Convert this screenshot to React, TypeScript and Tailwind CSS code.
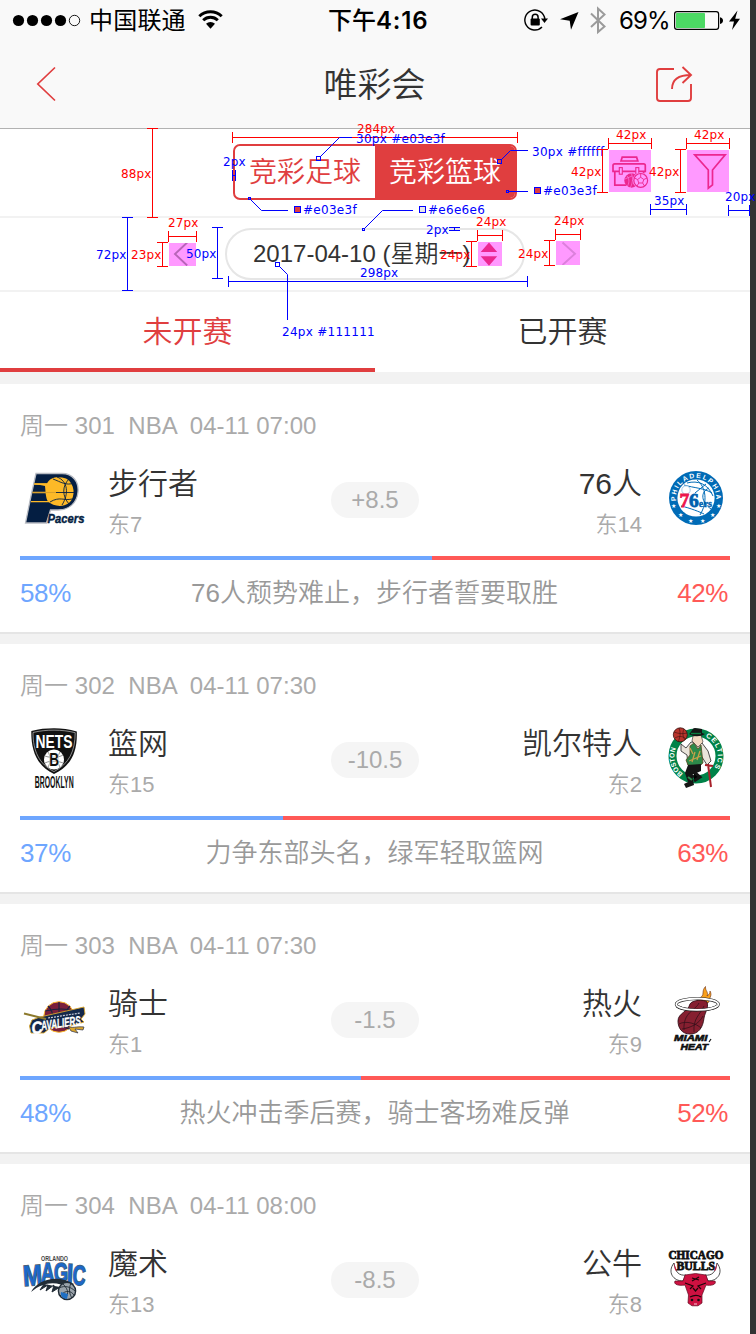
import React from "react";

type Match = {
  no: string;
  time: string;
  home: string;
  homeRank: string;
  away: string;
  awayRank: string;
  spread: string;
  homePct?: number;
  note?: string;
  homeLogo: React.ReactNode;
  awayLogo: React.ReactNode;
};

const LATIN = "Liberation Sans, Arial, sans-serif";
const BOLD = { fontFamily: LATIN, fontWeight: 700 };

/* ---------- team logos ---------- */

function LeftLogo({ children }: { children: React.ReactNode }) {
  return (
    <svg className="h-[72px] w-[72px] shrink-0 overflow-visible" viewBox="18 80 72 72">
      {children}
    </svg>
  );
}

function RightLogo({ children }: { children: React.ReactNode }) {
  return (
    <svg className="h-[72px] w-[72px] shrink-0 overflow-visible" viewBox="660 80 72 72">
      {children}
    </svg>
  );
}

const pacers = (
  <LeftLogo>
    <path d="M36 89.5H62C73 89.5 79 98 78 108C77 119 69 126 58 126H50.5L46.5 139H25.5L31 112Z" fill="#041e42" stroke="#b9bcc3" strokeWidth="1.3" />
    <path d="M34 100H48M32.5 108.5H46M31 117.7H50" stroke="#fdb927" strokeWidth="1.3" />
    <path d="M35 99.5H47C50 93 58 92 66 94.5C75 99 76 113 69 119C62 124 53 122 48 117.5C45.5 114 45.5 106 45 102C42 101 38 101 35 100.5Z" fill="#fdb927" />
    <path d="M36 108.5H74M53 95C61 98 66 102 74 99M50 118C60 112 64 117 72 115M69 95C62 102 62 112 69 120M57 93C68 97 69 110 62 121" fill="none" stroke="#041e42" strokeWidth="0.9" />
    <path d="M33 108.5H56" stroke="#d9a02a" strokeWidth="1" />
    <text x="47.5" y="139" fontSize="13.5" fontStyle="italic" {...BOLD} textLength="37" lengthAdjust="spacingAndGlyphs" fill="#041e42" stroke="#041e42" strokeWidth="0.4">Pacers</text>
  </LeftLogo>
);

const sixers = (
  <RightLogo>
    <circle cx="696" cy="114" r="27" fill="#006bb6" />
    <circle cx="696" cy="114" r="18.6" fill="#fff" />
    <path id="sixers-arc" d="M676 117A20.2 20.2 0 1 1 716 117" fill="none" />
    <text fontSize="6.8" {...BOLD} fill="#fff">
      <textPath href="#sixers-arc" textLength="67">PHILADELPHIA</textPath>
    </text>
    <path d="M684 101C694 104 704 104 712 109M697 96C706 103 708 118 700 131M687 99C698 96 708 100 713 112M706 100L695 109M681 122C690 124 700 128 704 130M709 104C700 108 701 118 711 125" fill="none" stroke="#006bb6" strokeWidth="1" />
    <circle cx="686" cy="106" r="4.2" fill="#fff" stroke="#8fbde0" strokeWidth="0.8" />
    <text x="679.5" y="123.3" fontSize="19.5" fontFamily="Liberation Serif, serif" fontWeight="700" fill="#ed174c" stroke="#ed174c" strokeWidth="0.8">7</text>
    <text x="689" y="123.3" fontSize="19.5" fontFamily="Liberation Serif, serif" fontWeight="700" fill="#0060ae" stroke="#0060ae" strokeWidth="0.8">6</text>
    <text x="698.8" y="122.8" fontSize="11" fontFamily="Liberation Serif, serif" fontWeight="700" textLength="13.2" lengthAdjust="spacingAndGlyphs" fill="#0060ae" stroke="#0060ae" strokeWidth="0.3">ers</text>
    <g fill="#fff" fontSize="6" fontFamily="DejaVu Sans, sans-serif" textAnchor="middle">
      <text x="673.6" y="123.5">★</text>
      <text x="680" y="133">★</text>
      <text x="690" y="139">★</text>
      <text x="702.5" y="139">★</text>
      <text x="712.3" y="133">★</text>
      <text x="718.6" y="123.5">★</text>
    </g>
  </RightLogo>
);

const nets = (
  <LeftLogo>
    <path d="M31.3 87C39 84.8 46 84.2 54 84.2S69 84.8 76.8 87.5C77.5 108 71 122 54 130C37 122 31 107 31.3 87Z" fill="#111" />
    <path d="M33 88.5C46 85.3 62 85.3 75.2 88.7C75.2 107 69 120 54 127.6C39 120 33 107 33 88.5Z" fill="none" stroke="#ddd" strokeWidth="0.6" />
    <text x="35.5" y="104" fontSize="19" {...BOLD} textLength="37" lengthAdjust="spacingAndGlyphs" fill="#fff">NETS</text>
    <circle cx="54" cy="115.5" r="10" fill="#fff" />
    <path d="M45 112C50 114 58 114 63 111M45 119C51 116 58 117 63 119M48 108C51 113 51 118 48 123M60 108C57 113 57 118 60 123" fill="none" stroke="#777" strokeWidth="0.8" />
    <text x="49.2" y="121.8" fontSize="18" {...BOLD} textLength="9.8" lengthAdjust="spacingAndGlyphs" fill="#111" stroke="#fff" strokeWidth="1.2" style={{ paintOrder: "stroke" }}>B</text>
    <text x="34.7" y="143.8" fontSize="16" {...BOLD} textLength="39" lengthAdjust="spacingAndGlyphs" fill="#111">BROOKLYN</text>
  </LeftLogo>
);

const celtics = (
  <RightLogo>
    <circle cx="696" cy="112" r="23.5" fill="#fff" stroke="#008248" strokeWidth="8" />
    <path id="celtics-left" d="M683 129.5A21.2 21.2 0 0 1 676.5 103" fill="none" />
    <path id="celtics-right" d="M705.5 92.8A21.2 21.2 0 0 1 712.5 126" fill="none" />
    <text fontSize="7" {...BOLD} fill="#fff">
      <textPath href="#celtics-left" textLength="28" lengthAdjust="spacingAndGlyphs">BOSTON</textPath>
    </text>
    <text fontSize="7" {...BOLD} fill="#fff">
      <textPath href="#celtics-right" textLength="36">CELTICS</textPath>
    </text>
    <circle cx="680.3" cy="90.8" r="7" fill="#b8342c" stroke="#391310" strokeWidth="0.8" />
    <path d="M674 88C679 90 683 90 687 89M675 94C680 91 684 93 686 95M679 84C681 89 680 94 678 98M684 85C682 89 683 93 685 96" fill="none" stroke="#391310" strokeWidth="0.6" />
    <path d="M681 100L686 104L691 98L702 99L708 107L711 117L707 121L702 113L701 121H688L687 111L681 107Z" fill="#e9e4da" stroke="#222" strokeWidth="0.8" />
    <path d="M690 102L694 99L698 105L701 101L703 119L699 122L688 121L686 116L690 111Z" fill="#2d8a4a" stroke="#5a4a1e" strokeWidth="0.8" />
    <path d="M690 104L693 110M695 108L692 118M700 107L697 116M689 117L701 112" stroke="#c9a14a" strokeWidth="1.3" />
    <path d="M693 92L701 91L703 98L698 103L692 97Z" fill="#f3d8c0" stroke="#222" strokeWidth="0.6" />
    <path d="M689 90C691 89 692 84 695 84L702 85L702 89L705 90C700 93 694 93 689 90Z" fill="#151515" />
    <path d="M691 89.5H701" stroke="#0b7a3e" strokeWidth="1.4" />
    <path d="M688 121L701 120L701 127L692 131L694 141L686 144L684 140L688 138L685 129Z" fill="#151515" />
    <path d="M694 128L700 133L694 137M688 130L694 133" stroke="#151515" strokeWidth="3" />
    <path d="M688 133L692 136" stroke="#2d8a4a" strokeWidth="2" />
    <path d="M708 120L711 143M705 121L713 122" stroke="#a8212a" strokeWidth="2" />
  </RightLogo>
);

const cavaliers = (
  <LeftLogo>
    <circle cx="59" cy="113" r="15.3" fill="#7a1f3c" stroke="#fdbb30" strokeWidth="1" />
    <path d="M59 98V109M48 102C52 106 53 110 53 114M70 102C66 106 65 110 65 114M45 107C54 105 66 104 73 107M50 124C57 121 65 123 69 125" fill="none" stroke="#19233f" strokeWidth="1.1" />
    <path d="M32 116L40 113L84 103L85 110L81 115L84 118L76 120.5L50 124L44 129L31 129L29.5 122Z" fill="#14284b" stroke="#d9a52c" strokeWidth="0.9" />
    <g transform="rotate(-8 58 120)">
      <text x="31" y="126.5" fontSize="17" {...BOLD} fontStyle="italic" textLength="11" lengthAdjust="spacingAndGlyphs" fill="#fff" stroke="#fff" strokeWidth="0.5">C</text>
      <text x="41" y="124" fontSize="13" {...BOLD} fontStyle="italic" textLength="40" lengthAdjust="spacingAndGlyphs" fill="#fff" stroke="#fff" strokeWidth="0.3">AVALIERS</text>
      <path d="M49 112.7L81 112.2" stroke="#c7cbd6" strokeWidth="1.2" strokeDasharray="2 1" />
    </g>
    <path d="M24 109.5L46 115" stroke="#8d7a2d" strokeWidth="2" />
    <path d="M68 122C71 125 77 122 84 123L83 126L75 125L78 129L71 127Z" fill="#dba52b" stroke="#29304a" strokeWidth="0.7" />
  </LeftLogo>
);

const heat = (
  <RightLogo>
    <path d="M697 98C698 93 703 94 703 89C703 86 704 84 705.5 82.5C705 87 709 88 707 92C710 90 710 88 710 87C713 92 708 95 709 98L704 101Z" fill="#f9a01b" stroke="#6b2d12" strokeWidth="0.6" />
    <ellipse cx="697.3" cy="100.3" rx="21" ry="5.8" fill="none" stroke="#222" strokeWidth="3" />
    <ellipse cx="697.3" cy="100.3" rx="21" ry="5.8" fill="none" stroke="#fff" strokeWidth="1.8" />
    <path d="M690 100C692 96 704 95 707 98C709 104 705 108 704 114C703 123 699 130 690 130C682 130 678 124 678 117C678 109 688 108 690 100Z" fill="#861f30" stroke="#331018" strokeWidth="0.9" />
    <path d="M699 99C695 107 683 108 684 126M704 102C700 111 693 114 694 128M679 120C686 116 697 120 701 124M703 112C699 120 690 124 682 125" fill="none" stroke="#35101a" strokeWidth="0.8" />
    <path d="M677 102.3C684 107.5 711 107.5 718 101.7" fill="none" stroke="#222" strokeWidth="3" />
    <path d="M677 102C684 107.2 711 107.2 718 101.4" fill="none" stroke="#fff" strokeWidth="1.9" />
    <text x="674" y="137.3" fontSize="9.2" {...BOLD} fontStyle="italic" textLength="33.5" lengthAdjust="spacingAndGlyphs" fill="#111" stroke="#111" strokeWidth="0.6">MIAMI</text>
    <path d="M711 135L709 138" stroke="#111" strokeWidth="1.2" />
    <text x="680.5" y="145.8" fontSize="9.2" {...BOLD} fontStyle="italic" textLength="27.5" lengthAdjust="spacingAndGlyphs" fill="#111" stroke="#111" strokeWidth="0.6">HEAT</text>
  </RightLogo>
);

const magic = (
  <LeftLogo>
    <text x="41" y="97" fontSize="8" {...BOLD} textLength="27" lengthAdjust="spacingAndGlyphs" fill="#444">ORLANDO</text>
    <g {...BOLD} fill="#1c68c8" stroke="#4d5f70" strokeWidth="1.6" style={{ paintOrder: "stroke" }}>
      <text x="23" y="121.5" fontSize="29" transform="rotate(-4 32 112)" textLength="19" lengthAdjust="spacingAndGlyphs">M</text>
      <text x="41" y="118" fontSize="27" textLength="13.5" lengthAdjust="spacingAndGlyphs">A</text>
      <text x="54" y="118" fontSize="27" textLength="14" lengthAdjust="spacingAndGlyphs">G</text>
      <text x="67" y="119.5" fontSize="28" transform="rotate(3 70 110)" textLength="6" lengthAdjust="spacingAndGlyphs">I</text>
      <text x="72.5" y="121" fontSize="28" transform="rotate(4 78 112)" textLength="13" lengthAdjust="spacingAndGlyphs">C</text>
    </g>
    <path d="M31 128C38 115 58 110 74 120L69 124C57 117 44 117 31 128Z" fill="#222c36" />
    <path d="M44 120L40 126L48 121L46 127L54 121L52 128L60 123" fill="#222c36" stroke="#222c36" strokeWidth="1" />
    <circle cx="67" cy="127" r="8.6" fill="#9aa3ab" stroke="#222c36" strokeWidth="1.4" />
    <path d="M59 124C65 121 71 123 75 127M60 132C66 125 71 127 74 131M63 120C69 126 69 131 64 135M71 119C68 126 70 131 72 134" fill="none" stroke="#222c36" strokeWidth="0.9" />
    <path d="M61 128C60 132 63 135 67 135L68 130Z" fill="#1f6fc4" />
  </LeftLogo>
);

const bulls = (
  <RightLogo>
    <text x="668.5" y="95.3" fontSize="12.6" fontFamily="Liberation Serif, serif" fontWeight="700" textLength="55" lengthAdjust="spacingAndGlyphs" fill="#111" stroke="#111" strokeWidth="0.8">CHICAGO</text>
    <path d="M674 99C667 108 673 117 683 117L686 111C679 112 675 108 674 99ZM717 99C724 108 718 117 708 117L705 111C712 112 716 108 717 99Z" fill="#fff" stroke="#222" strokeWidth="0.8" />
    <path d="M674 99L675 106L677 107ZM717 99L716 106L714 107Z" fill="#ce1141" />
    <text x="676.5" y="106" fontSize="12.6" fontFamily="Liberation Serif, serif" fontWeight="700" textLength="38.5" lengthAdjust="spacingAndGlyphs" fill="#111" stroke="#111" strokeWidth="0.8">BULLS</text>
    <path d="M685 111L695.5 109.5L706 111L708 117L715 117C717 121 710 122 706 121L702 131L702 139L698 141.8H692L688 139L688.5 131L685 121C680 122 673 121 675 117L683 117Z" fill="#ce1141" stroke="#5d0b20" strokeWidth="0.7" />
    <path d="M685 119L693 122L690 125M706 119L698 122L701 125M692 114L699 116M692 117L699 113M693 124L695.5 127L698 124M690 133C694 131 698 131 701 133" fill="none" stroke="#1b0509" strokeWidth="1.2" />
    <circle cx="692" cy="136" r="1.3" fill="#111" />
    <circle cx="698.5" cy="136" r="1.3" fill="#111" />
    <path d="M694 140H697" stroke="#fff" strokeWidth="0.8" />
  </RightLogo>
);

const matches: Match[] = [
  { no: "301", time: "04-11 07:00", home: "步行者", homeRank: "东7", away: "76人", awayRank: "东14", spread: "+8.5", homePct: 58, note: "76人颓势难止，步行者誓要取胜", homeLogo: pacers, awayLogo: sixers },
  { no: "302", time: "04-11 07:30", home: "篮网", homeRank: "东15", away: "凯尔特人", awayRank: "东2", spread: "-10.5", homePct: 37, note: "力争东部头名，绿军轻取篮网", homeLogo: nets, awayLogo: celtics },
  { no: "303", time: "04-11 07:30", home: "骑士", homeRank: "东1", away: "热火", awayRank: "东9", spread: "-1.5", homePct: 48, note: "热火冲击季后赛，骑士客场难反弹", homeLogo: cavaliers, awayLogo: heat },
  { no: "304", time: "04-11 08:00", home: "魔术", homeRank: "东13", away: "公牛", awayRank: "东8", spread: "-8.5", homeLogo: magic, awayLogo: bulls },
];

function MatchCard({ m }: { m: Match }) {
  return (
    <section className="h-[260px] shrink-0 border-b-[10px] border-[#f2f2f2]">
      <div className="flex h-[250px] flex-col border-b-2 border-[#e5e5e5] bg-white px-5">
        <div className="mt-6 h-9 text-[24px] leading-[36px] tracking-[0.03px] whitespace-pre text-[#aaa]">
          {`周一 ${m.no}  NBA  ${m.time}`}
        </div>
        <div className="-mx-[2px] mt-5 flex h-[72px] items-start">
          {m.homeLogo}
          <div className="ml-[18px] flex w-[223px] flex-col">
            <span className="h-10 text-[30px] leading-[40px] text-[#333]">{m.home}</span>
            <span className="mt-[6px] h-[30px] text-[22px] leading-[30px] text-[#aaa]">{m.homeRank}</span>
          </div>
          <div className="mt-[18px] h-9 w-[88px] rounded-full bg-[#f5f5f5] text-center text-[24px] leading-[36px] text-[#aaa]">{m.spread}</div>
          <div className="mr-[18px] flex w-[223px] flex-col text-right">
            <span className="h-10 text-[30px] leading-[40px] text-[#333]">{m.away}</span>
            <span className="mt-[6px] h-[30px] text-[22px] leading-[30px] text-[#aaa]">{m.awayRank}</span>
          </div>
          {m.awayLogo}
        </div>
        {m.homePct !== undefined && (
          <>
            <div className="mt-5 flex h-1 shrink-0 bg-[#ff5957]">
              <div className="bg-[#6ea6ff]" style={{ width: `${m.homePct}%` }} />
            </div>
            <div className="mt-[13px] flex h-10 items-center justify-between text-[26px] leading-[40px]">
              <span className="w-[52px] tracking-[-0.4px] text-[#6ea6ff]">{m.homePct}%</span>
              <span className="text-[#999]">{m.note}</span>
              <span className="w-[53px] pr-[2px] text-right tracking-[-0.4px] text-[#ff5957]">{100 - m.homePct}%</span>
            </div>
          </>
        )}
      </div>
    </section>
  );
}

/* ---------- design-spec annotations ---------- */

const RED = "#ff0000";
const BLUE = "#0000ff";

function HRule({ x1, x2, y, c }: { x1: number; x2: number; y: number; c: string }) {
  return <path d={`M${x1 + 0.5} ${y + 0.5}H${x2 + 0.5}M${x1 + 0.5} ${y - 5}V${y + 6}M${x2 + 0.5} ${y - 5}V${y + 6}`} stroke={c} fill="none" />;
}

function VRule({ y1, y2, x, c }: { y1: number; y2: number; x: number; c: string }) {
  return <path d={`M${x + 0.5} ${y1 + 0.5}V${y2 + 0.5}M${x - 5} ${y1 + 0.5}H${x + 6}M${x - 5} ${y2 + 0.5}H${x + 6}`} stroke={c} fill="none" />;
}

function Label({ x, y, c, children }: { x: number; y: number; c: string; children: string }) {
  return (
    <text x={x} y={y} fill={c} fontSize="12" fontWeight="400" letterSpacing={children.includes("#") ? 0.28 : 0.1} fontFamily="DejaVu Sans, Verdana, sans-serif">
      {children}
    </text>
  );
}

function Leader({ d }: { d: string }) {
  return <path d={d} fill="none" stroke={BLUE} />;
}

function Handle({ x, y, s = 4, fill = "none" }: { x: number; y: number; s?: number; fill?: string }) {
  return <rect x={x - s / 2} y={y - s / 2} width={s} height={s} fill={fill} stroke={BLUE} />;
}

function Annotations() {
  return (
    <svg className="pointer-events-none absolute top-0 left-0 h-[360px] w-[756px]" viewBox="0 0 756 360">
      <VRule x={152} y1={128} y2={217} c={RED} />
      <Label x={121} y={178} c={RED}>88px</Label>
      <VRule x={127} y1={217} y2={290} c={BLUE} />
      <Label x={96} y={259} c={BLUE}>72px</Label>
      <VRule x={162} y1={242} y2={266} c={RED} />
      <Label x={131} y={259} c={RED}>23px</Label>
      <HRule x1={168} x2={196} y={236} c={RED} />
      <Label x={168} y={227} c={RED}>27px</Label>
      <VRule x={217} y1={227} y2={278} c={BLUE} />
      <Label x={186} y={258} c={BLUE}>50px</Label>
      <HRule x1={228} x2={527} y={281} c={BLUE} />
      <Label x={360} y={277} c={BLUE}>298px</Label>
      <HRule x1={232} x2={517} y={137} c={RED} />
      <Label x={357} y={133} c={RED}>284px</Label>

      <path d="M232.5 170V181M235.5 170V181M232 175.5H236" stroke={BLUE} />
      <Label x={223} y={166} c={BLUE}>2px</Label>
      <Handle x={249.5} y={198.5} s={2} />
      <Leader d="M250.5 199.5L261.5 210.5H288" />
      <Handle x={297.5} y={209.5} s={6} fill="#e03e3f" />
      <Label x={303} y={214} c={BLUE}>#e03e3f</Label>

      <Handle x={277.5} y={264.5} />
      <Leader d="M279.5 266.5L287.5 274.5V320" />
      <Label x={282} y={336} c={BLUE}>24px #111111</Label>

      <Handle x={318.5} y={158.5} />
      <Leader d="M320.5 156.5L339.5 137.5H352" />
      <Label x={356} y={143} c={BLUE}>30px #e03e3f</Label>

      <Handle x={363.5} y={229.5} s={2} />
      <Leader d="M364.5 228.5L382.5 210.5H413" />
      <Handle x={422.5} y={209.5} s={6} fill="#e6e6e6" />
      <Label x={428} y={214} c={BLUE}>#e6e6e6</Label>

      <Label x={426} y={234} c={BLUE}>2px</Label>
      <path d="M449 227.5H460M449 230.5H460M454.5 227V231" stroke={BLUE} />
      <HRule x1={477} x2={502} y={235} c={RED} />
      <Label x={476} y={226} c={RED}>24px</Label>
      <VRule x={471} y1={241} y2={266} c={RED} />
      <Label x={440} y={259} c={RED}>24px</Label>

      <Handle x={499.5} y={161.5} />
      <Leader d="M501.5 159.5L510.5 150.5H528" />
      <Label x={532} y={156} c={BLUE}>30px #ffffff</Label>
      <Handle x={507.5} y={191.5} s={2} />
      <Leader d="M508.5 191.5H528" />
      <Handle x={537.5} y={190.5} s={6} fill="#e03e3f" />
      <Label x={543} y={195} c={BLUE}>#e03e3f</Label>

      <HRule x1={608} x2={651} y={143} c={RED} />
      <Label x={616} y={139} c={RED}>42px</Label>
      <VRule x={602} y1={149} y2={192} c={RED} />
      <Label x={571} y={176} c={RED}>42px</Label>
      <HRule x1={686} x2={729} y={143} c={RED} />
      <Label x={694} y={139} c={RED}>42px</Label>
      <VRule x={680} y1={149} y2={192} c={RED} />
      <Label x={649} y={176} c={RED}>42px</Label>
      <HRule x1={650} x2={686} y={209} c={BLUE} />
      <Label x={654} y={205} c={BLUE}>35px</Label>
      <HRule x1={728} x2={749} y={210} c={BLUE} />
      <Label x={725} y={201} c={BLUE}>20px</Label>

      <HRule x1={555} x2={580} y={234} c={RED} />
      <Label x={554} y={225} c={RED}>24px</Label>
      <VRule x={549} y1={240} y2={265} c={RED} />
      <Label x={518} y={258} c={RED}>24px</Label>
    </svg>
  );
}

/* ---------- header ---------- */

function StatusBar() {
  return (
    <div className="flex h-10 items-center text-black">
      <svg className="ml-3 h-[14px] w-[70px] shrink-0" viewBox="12 13 70 14">
        <circle cx="18.5" cy="20.5" r="5.6" />
        <circle cx="32.5" cy="20.5" r="5.6" />
        <circle cx="46.5" cy="20.5" r="5.6" />
        <circle cx="60.5" cy="20.5" r="5.6" />
        <circle cx="74.5" cy="20.5" r="5.2" fill="none" stroke="#000" strokeWidth="0.9" />
      </svg>
      <span className="ml-[7px] w-[97px] pt-[2px] text-[24px] leading-[38px] font-normal tracking-[0.2px] whitespace-nowrap">中国联通</span>
      <svg className="ml-[12px] h-5 w-[26px] shrink-0" viewBox="198 10 26 20">
        <path d="M199.3 16.3A16 16 0 0 1 221.7 16.3M203.2 20.3A10.4 10.4 0 0 1 217.8 20.3" fill="none" stroke="#000" strokeWidth="2.9" />
        <path d="M206 23.7A6.5 6.5 0 0 1 215 23.7L210.5 28.7Z" />
      </svg>
      <span className="ml-[104px] w-[100px] pt-[2px] font-['Inter','Noto_Sans_CJK_SC',sans-serif] text-[24px] leading-[38px] font-semibold whitespace-nowrap">
        <span className="font-medium">下午</span>
        <span className="tracking-[0.8px]">4:16</span>
      </span>
      <svg className="ml-[94px] h-[30px] w-[86px] shrink-0" viewBox="522 5 86 30">
        <path d="M542 27A10 10 0 1 1 544.8 19" fill="none" stroke="#000" strokeWidth="1.4" />
        <path d="M541 18.5H548L544.5 23Z" />
        <rect x="530.6" y="18.5" width="9.2" height="7" rx="1" />
        <path d="M532.3 19V17.2A2.9 2.9 0 0 1 538.1 17.2V19" fill="none" stroke="#000" strokeWidth="1.5" />
        <path d="M578.5 12L571 29.7L569.7 20.8L560 19.3Z" />
        <path d="M591 13.5L604.5 26.5L598 32V8.5L604.5 14.5L591 27" fill="none" stroke="#9b9b9b" strokeWidth="2" />
      </svg>
      <span className="ml-[11px] w-[50px] pt-[2px] font-['Inter',sans-serif] text-[24px] leading-[38px] font-normal tracking-[-0.9px] whitespace-nowrap">69%</span>
      <svg className="ml-[4px] h-6 w-[70px] shrink-0" viewBox="673 8 70 24">
        <rect x="674.6" y="11.6" width="44" height="17.8" rx="2.4" fill="none" stroke="#000" strokeWidth="1.2" />
        <rect x="676" y="13" width="29" height="15" rx="0.8" fill="#4cd964" />
        <path d="M720 17.3C724 18 724 23.2 720 24Z" />
        <path d="M737.5 10.5L729 21.6H734L732 30L740 18.7H735.2Z" />
      </svg>
    </div>
  );
}

function NavBar() {
  return (
    <div className="flex h-[88px] items-center justify-between">
      <svg className="ml-[34px] h-10 w-[24px]" viewBox="34 64 24 40" fill="none" stroke="#e03e3f" strokeWidth="1.7">
        <path d="M55 67.5L37.8 84L55 100.5" />
      </svg>
      <h1 className="ml-[37px] pt-px text-[34px] leading-[50px] text-[#333]">唯彩会</h1>
      <svg className="mr-[56px] h-10 w-10" viewBox="654 64 40 40" fill="none" stroke="#e03e3f" strokeWidth="1.9">
        <path d="M674 69H660Q657 69 657 72V98Q657 101 660 101H688Q691 101 691 98V84" />
        <path d="M672 89C672 79 679 75 691 75M682.5 67L691 75L682.5 83" />
      </svg>
    </div>
  );
}

export default function App() {
  return (
    <div className="relative flex h-[1334px] w-[756px] overflow-hidden bg-[#333] font-['Liberation_Sans','Noto_Sans_CJK_SC',sans-serif] font-[350]">
      <main className="flex w-[750px] shrink-0 flex-col bg-white">
        <header className="h-[129px] shrink-0 border-b border-[#b2b2b2] bg-[#f9f9f9]">
          <StatusBar />
          <NavBar />
        </header>

        <div className="flex h-[89px] shrink-0 items-start border-b-2 border-[#f2f2f2] pl-[233px]">
          <div className="mt-[15px] flex h-14 w-[284px] overflow-hidden rounded-[7px] border-2 border-[#e03e3f] text-center text-[28px] leading-[50px]">
            <button className="w-[140px] pt-[2px] text-[#e03e3f]">竞彩足球</button>
            <button className="w-[140px] bg-[#e03e3f] pt-[2px] text-white">竞彩篮球</button>
          </div>
          <button className="mt-[21px] ml-[92px] h-[42px] w-[42px] bg-[#ff99ff]">
            <svg className="h-[42px] w-[42px]" viewBox="0 0 42 42" fill="none" stroke="#ec2790" strokeWidth="1.7">
              <path d="M12 11L13.2 7.2H27.6L28.8 11Z" />
              <path d="M5.8 21.5V35.2H17M34.6 21.5V24" />
              <path d="M4 21.3V15.5Q4 13.8 5.7 13.8H34.6Q36.3 13.8 36.3 15.5V21.3Z" />
              <rect x="10.3" y="17.6" width="3" height="6.6" fill="#ff99ff" strokeWidth="1.1" />
              <rect x="26.8" y="17.6" width="3" height="6.6" fill="#ff99ff" strokeWidth="1.1" />
              <circle cx="22.5" cy="30.5" r="7.2" fill="#ec2790" stroke="none" />
              <path d="M18 26C21 29 20 34 18 37M22 23C25 28 23 35 21 38M16 29L23 26" stroke="#ff99ff" strokeWidth="0.5" />
              <circle cx="31.7" cy="30.4" r="8" fill="#ff99ff" stroke="none" />
              <circle cx="31.7" cy="30.4" r="6.9" strokeWidth="1.2" />
              <path d="M31.7 27.3L34.8 29.5L33.6 33H29.8L28.6 29.5ZM31.7 27.3V24M34.8 29.5L38 28M33.6 33L35.5 36M29.8 33L28 36M28.6 29.5L25.3 28" strokeWidth="0.9" />
            </svg>
          </button>
          <button className="mt-[21px] ml-[36px] h-[42px] w-[42px] bg-[#ff99ff]">
            <svg className="h-[42px] w-[42px]" viewBox="0 0 42 42" fill="none" stroke="#ec2790" strokeWidth="1.7">
              <path d="M7.7 4.8H38.2L25.5 20V34.8L21.3 38.2V20Z" />
            </svg>
          </button>
        </div>

        <div className="flex h-[74px] shrink-0 items-start border-b-2 border-[#f2f2f2] pl-[169px]">
          <button className="mt-[25px] h-[23px] w-[27px] bg-[#ff99ff]">
            <svg className="h-[23px] w-[27px]" viewBox="0 0 27 23" fill="none" stroke="#b865b8" strokeWidth="1.9">
              <path d="M18.2 -0.5L6 11L18.2 22.5" />
            </svg>
          </button>
          <div className="mt-[10px] ml-[29px] flex h-[52px] w-[300px] items-start rounded-full border-2 border-[#e6e6e6] pl-[26px]">
            <span className="w-[225px] text-[24px] leading-[48px] whitespace-nowrap text-[#333]">2017-04-10 (星期一)</span>
            <svg className="mt-[12px] h-6 w-6 bg-[#ff99ff]" viewBox="0 0 24 24" fill="#ec2790">
              <path d="M2.7 10L11 0.5L19.2 10ZM2.7 14.2H19.2L11 23.7Z" />
            </svg>
          </div>
          <button className="mt-[23px] ml-[31px] h-6 w-6 bg-[#ff99ff]">
            <svg className="h-6 w-6" viewBox="0 0 24 24" fill="none" stroke="#dc80dc" strokeWidth="1.9">
              <path d="M6.5 1.5L19 12.7L6.5 24" />
            </svg>
          </button>
        </div>

        <nav className="flex h-20 shrink-0 text-center text-[30px] leading-[72px]">
          <button className="w-[375px] border-b-4 border-[#e03e3f] pt-[4px] text-[#e03e3f]">未开赛</button>
          <button className="w-[375px] border-b-4 border-white pt-[4px] text-[#333]">已开赛</button>
        </nav>

        <div className="h-3 shrink-0 bg-[#f2f2f2]" />
        {matches.map((m) => (
          <MatchCard key={m.no} m={m} />
        ))}
      </main>
      <Annotations />
    </div>
  );
}
